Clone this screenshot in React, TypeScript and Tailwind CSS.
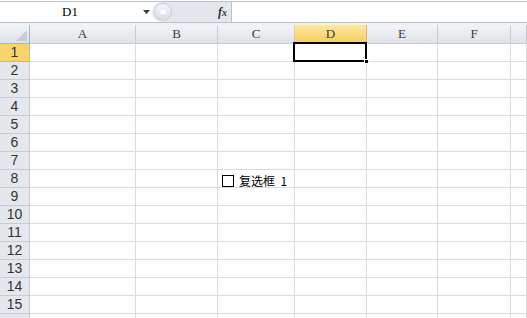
import React from 'react';

const cols = ['A', 'B', 'C', 'D', 'E', 'F', ''];
const rows = Array.from({ length: 16 }, (_, i) => i + 1);

const FormulaBar: React.FC = () => (
  <div className="flex h-[22px] border-t border-b border-[#b8c2cd] bg-white mt-px">
    <div className="relative w-[152px] flex items-center">
      <span className="w-[140px] text-center text-[13px] text-black font-['Liberation_Serif',serif]">D1</span>
      <svg className="absolute left-[143px] top-[8px]" width="7" height="4" viewBox="0 0 7 4">
        <path d="M0 0h7L3.5 4z" fill="#3a3a3a" />
      </svg>
    </div>
    <div className="w-[80px] flex items-center bg-[#e3e7ec] border-r border-[#b8c2cd] rounded-l-full pl-[2px]">
      <div className="w-[18px] h-[18px] rounded-full bg-gradient-to-b from-[#f4f6f8] to-[#d9dee4] border border-[#c7ced6] flex items-center justify-center">
        <div className="w-[6px] h-[4px] rounded-full bg-white" />
      </div>
      <span className="ml-auto mr-[4px] text-[12px] italic font-bold text-[#333] font-['Liberation_Serif',serif]">
        f<span className="text-[10px]">x</span>
      </span>
    </div>
    <div className="flex-1 bg-white" />
  </div>
);

const App: React.FC = () => {
  return (
    <div className="w-[527px] h-[318px] overflow-hidden bg-white">
      <FormulaBar />
      <div className="h-[2px] bg-[#eef0f3]" />
      <div className="relative grid grid-cols-[30px_106px_82px_77px_72px_71px_73px_1fr] grid-rows-[19px_repeat(16,18px)]">
        <div className="relative border-r border-b border-[#9eb6ce] bg-gradient-to-b from-[#f1f3f6] to-[#dde2e8]">
          <svg className="absolute right-[2px] bottom-[2px]" width="11" height="11" viewBox="0 0 11 11">
            <path d="M11 0V11H0z" fill="#c5ccd4" />
          </svg>
        </div>
        {cols.map((c, i) => (
          <div
            key={i}
            className={
              c === 'D'
                ? 'flex items-center justify-center border-r border-b border-[#e0b552] bg-gradient-to-b from-[#fde8a2] to-[#f7cc5a] text-[13px] text-[#3b3b3b] font-["Liberation_Serif",serif]'
                : 'flex items-center justify-center border-r border-b border-[#c5ccd5] bg-gradient-to-b from-[#f2f4f6] to-[#dfe3e8] text-[13px] text-[#3b3b3b] font-["Liberation_Serif",serif]'
            }
          >
            {c}
          </div>
        ))}
        {rows.map((r) => (
          <React.Fragment key={r}>
            <div
              className={
                r === 1
                  ? 'flex items-center justify-center border-r border-b border-[#e0b552] bg-[#f8d46b] text-[14px] text-[#333] font-["Liberation_Sans",sans-serif]'
                  : 'flex items-center justify-center border-r border-b border-[#c5ccd5] bg-[#e4e8ed] text-[14px] text-[#333] font-["Liberation_Sans",sans-serif]'
              }
            >
              {r < 16 ? r : ''}
            </div>
            {cols.map((_, i) => (
              <div key={i} className="border-r border-b border-[#dadcdd]" />
            ))}
          </React.Fragment>
        ))}
        <div className="absolute left-[293px] top-[17px] w-[74px] h-[20px] border-2 border-black pointer-events-none">
          <div className="absolute -right-[4px] -bottom-[4px] w-[5px] h-[5px] bg-black border border-white" />
        </div>
        <label className="absolute left-[222px] top-[150px] flex items-center gap-[5px]">
          <span className="w-[12px] h-[12px] border border-black bg-white" />
          <span className="text-[12px] leading-none text-black font-['Noto_Sans_CJK_SC',sans-serif]">复选框&nbsp; 1</span>
        </label>
      </div>
    </div>
  );
};

export default App;
